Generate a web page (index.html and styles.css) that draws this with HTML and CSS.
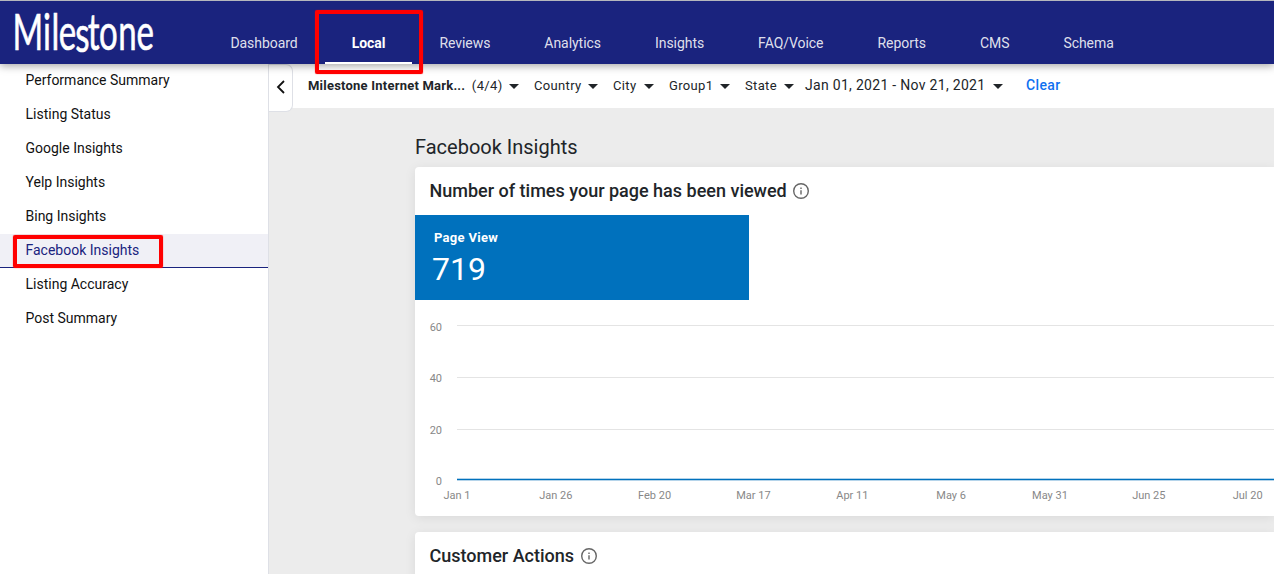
FILE: index.html
```html
<!DOCTYPE html>
<html lang="en">
<head>
  <meta charset="UTF-8">
  <title>Facebook Insights</title>
  <link rel="stylesheet" href="styles.css">
</head>
<body>

<header class="header">
  <svg class="logo" width="160" height="64" viewBox="0 0 160 64">
    <text class="logo_text" transform="translate(0 50) scale(.66 1)" x="19 65 78 89 114 133 150 179 207" y="0 0 0 0 2 0 0 0 0">Milestone</text>
  </svg>
  <nav class="nav">
    <a class="nav_item">Dashboard</a>
    <a class="nav_item is-active">Local</a>
    <a class="nav_item">Reviews</a>
    <a class="nav_item">Analytics</a>
    <a class="nav_item">Insights</a>
    <a class="nav_item">FAQ/Voice</a>
    <a class="nav_item">Reports</a>
    <a class="nav_item">CMS</a>
    <a class="nav_item">Schema</a>
  </nav>
</header>

<div class="layout">
  <aside class="side">
    <a class="side_item">Performance Summary</a>
    <a class="side_item">Listing Status</a>
    <a class="side_item">Google Insights</a>
    <a class="side_item">Yelp Insights</a>
    <a class="side_item">Bing Insights</a>
    <a class="side_item is-active">Facebook Insights</a>
    <a class="side_item">Listing Accuracy</a>
    <a class="side_item">Post Summary</a>
  </aside>

  <main class="main">
    <div class="filter">
      <button class="filter_toggle">
        <svg width="10" height="14" viewBox="0 0 10 14"><path d="M8 1 2 7l6 6" fill="none" stroke="#111" stroke-width="1.8"/></svg>
      </button>
      <div class="filter_item filter_item-account"><b>Milestone Internet Mark...</b> <span>(4/4)</span></div>
      <div class="filter_item filter_item-country">Country</div>
      <div class="filter_item filter_item-city">City</div>
      <div class="filter_item filter_item-group">Group1</div>
      <div class="filter_item filter_item-state">State</div>
      <div class="filter_item filter_item-date">Jan 01, 2021 - Nov 21, 2021</div>
      <a class="filter_clear">Clear</a>
    </div>

    <div class="content">
      <h1 class="title">Facebook Insights</h1>

      <section class="card card-views">
        <h2 class="card_title">
          <span>Number of times your page has been viewed</span>
          <svg class="info" viewBox="0 0 16 16"><circle cx="8" cy="8" r="7.3"/><path d="M8 7.2v4.4M8 4.4v1.5"/></svg>
        </h2>
        <div class="tile">
          <div class="tile_label">Page View</div>
          <div class="tile_value">719</div>
        </div>
        <div class="chart">
          <div class="chart_y">
            <span>60</span>
            <span>40</span>
            <span>20</span>
            <span>0</span>
          </div>
          <div class="chart_plot"></div>
          <div class="chart_x">
            <span>Jan 1</span>
            <span>Jan 26</span>
            <span>Feb 20</span>
            <span>Mar 17</span>
            <span>Apr 11</span>
            <span>May 6</span>
            <span>May 31</span>
            <span>Jun 25</span>
            <span>Jul 20</span>
          </div>
        </div>
      </section>

      <section class="card card-actions">
        <h2 class="card_title">
          <span>Customer Actions</span>
          <svg class="info" viewBox="0 0 16 16"><circle cx="8" cy="8" r="7.3"/><path d="M8 7.2v4.4M8 4.4v1.5"/></svg>
        </h2>
      </section>
    </div>
  </main>
</div>

<div class="mark mark-tab"></div>
<div class="mark mark-side"></div>

</body>
</html>
```

FILE: styles.css
```css
* {
  box-sizing: border-box;
}
body {
  height: 574px;
  margin: 0;
  overflow: hidden;
  background-color: #ececec;
  color: #212529;
  font-family: Roboto, "Liberation Sans", sans-serif;
  font-size: 14px;
  white-space: nowrap;
}

.header {
  position: relative;
  z-index: 1;
  display: flex;
  height: 64px;
  border-top: 1px solid #b5b7bd;
  background-color: #1a237e;
  box-shadow: 0 2px 8px rgba(0, 0, 0, .35);
}
.logo {
  flex: none;
  margin-top: -1px;
}
.logo_text {
  fill: #fff;
  font-family: Lato, sans-serif;
  font-size: 50px;
  font-weight: 400;
  stroke: #fff;
  stroke-width: .6px;
}
.nav {
  display: flex;
  margin-left: 43.4px;
  letter-spacing: -.05px;
}
.nav_item {
  padding: 33px 27px 0;
  border-bottom: 2px solid transparent;
  color: rgba(255, 255, 255, .87);
  line-height: 18px;
}
.nav_item.is-active {
  border-color: #fff;
  color: #fff;
  font-weight: 700;
}

.layout {
  display: flex;
  height: 510px;
  overflow: hidden;
}
.side {
  flex: none;
  width: 269px;
  border-right: 1px solid #dee0e6;
  background-color: #fff;
}
.side_item {
  display: block;
  height: 34px;
  padding-left: 25.5px;
  color: #111;
  line-height: 33px;
}
.side_item.is-active {
  border-bottom: 1px solid #1a237e;
  background-color: #f0f0f6;
  color: #1a237e;
}

.main {
  flex: none;
  width: 1005px;
}
.filter {
  display: flex;
  height: 44px;
  background-color: #fff;
  font-size: 13px;
  letter-spacing: .35px;
  line-height: 43px;
}
.filter_toggle {
  display: flex;
  align-items: center;
  justify-content: center;
  width: 24px;
  height: 48px;
  margin-right: 15px;
  padding: 0 0 2px;
  border: 1px solid #dee0e6;
  border-left: none;
  border-radius: 0 7px 7px 0;
  background-color: #fff;
}
.filter_item {
  display: flex;
  height: 43px;
  align-items: center;
  justify-content: space-between;
}
.filter_item:after {
  content: '';
  margin-top: 2px;
  border: 5px solid transparent;
  border-top-color: #212529;
  border-bottom: none;
}
.filter_item-account {
  width: 211px;
  margin-right: 15px;
}
.filter_item-account b {
  font-weight: 700;
  letter-spacing: .22px;
}
.filter_item-country {
  width: 64px;
  margin-right: 15px;
}
.filter_item-city {
  width: 41px;
  margin-right: 15px;
}
.filter_item-group {
  width: 61px;
  margin-right: 15px;
}
.filter_item-state {
  width: 49px;
  margin-right: 11px;
}
.filter_item-date {
  width: 198px;
  margin-right: 23px;
  font-size: 14px;
  letter-spacing: .3px;
}
.filter_clear {
  color: #1070f0;
  font-size: 14px;
  font-weight: 500;
}

.content {
  padding: 28px 0 0 146px;
}
.title {
  height: 31px;
  margin: 0;
  font-size: 20px;
  font-weight: 400;
  line-height: 22px;
}
.card {
  border-radius: 4px 0 0 4px;
  background-color: #fff;
  box-shadow: 0 2px 12px rgba(0, 0, 0, .08);
}
.card-views {
  height: 349px;
  margin-bottom: 16px;
}
.card_title {
  display: flex;
  align-items: center;
  height: 48px;
  margin: 0;
  padding-left: 14.5px;
  font-size: 18px;
  font-weight: 500;
}
.card_title span {
  margin-top: -1px;
}
.info {
  width: 16px;
  height: 16px;
  margin-left: 6.5px;
  fill: none;
  stroke: #666;
  stroke-width: 1.4;
}
.tile {
  width: 334px;
  height: 85px;
  padding: 14px 0 0 17px;
  background-color: #0071bd;
  color: #fff;
}
.tile_label {
  padding-left: 2px;
  font-size: 13px;
  font-weight: 700;
  letter-spacing: .3px;
  line-height: 17px;
}
.tile_value {
  font-size: 32px;
  line-height: 46px;
}

.chart {
  display: grid;
  grid-template: 156px 30px / 42px 1fr;
  padding-top: 25px;
  color: #888;
  font-size: 11px;
}
.chart_y {
  display: flex;
  flex-direction: column;
  justify-content: space-between;
  height: 168px;
  margin-top: -4px;
  padding-right: 15px;
  line-height: 14px;
  text-align: right;
}
.chart_plot {
  height: 155px;
  border-bottom: 1px solid #0071bd;
  background: repeating-linear-gradient(#e4e4e4 0, #e4e4e4 1px, transparent 1px, transparent 52px);
  box-shadow: 0 1px 0 #b5d4ea, inset 0 -1px 0 #b5d4ea;
}
.chart_x {
  display: flex;
  grid-column: 2;
  margin: 8px 0 0 -49.5px;
  line-height: 14px;
}
.chart_x span {
  flex: none;
  width: 98.85px;
  text-align: center;
}

/* highlight frames */
.mark {
  position: absolute;
  z-index: 2;
  border: 4px solid #f00;
  border-radius: 2px;
  box-shadow: 0 0 1px #f00;
}
.mark-tab {
  top: 10px;
  left: 315px;
  width: 108px;
  height: 64px;
}
.mark-side {
  top: 235px;
  left: 13px;
  width: 150px;
  height: 33px;
}
```
